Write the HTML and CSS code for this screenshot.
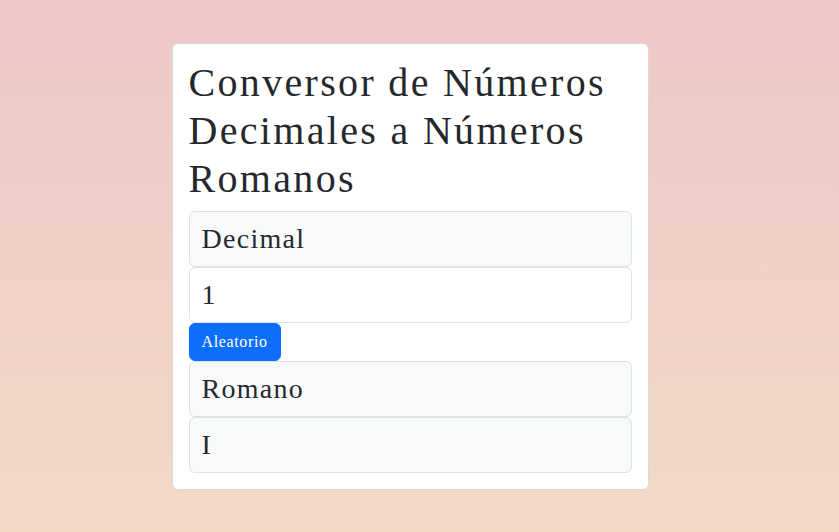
FILE: index.html
```html
<!DOCTYPE html>
<html lang="es">
<head>
<meta charset="utf-8">
<title>Conversor</title>
<link rel="stylesheet" href="styles.css">
</head>
<body>
<div class="page">
  <div class="card">
    <h1 class="title">Conversor de Números Decimales a Números Romanos</h1>
    <div class="box label">Decimal</div>
    <div class="box input">1</div>
    <div class="btn-row"><button class="btn">Aleatorio</button></div>
    <div class="box label">Romano</div>
    <div class="box label">I</div>
  </div>
</div>
</body>
</html>
```
FILE: styles.css
```css
html, body {
  margin: 0;
  height: 100%;
}
body {
  background: linear-gradient(180deg, #eec8c8 0%, #f2d9c6 100%);
  font-family: "Liberation Serif", "Times New Roman", serif;
  color: #212529;
  letter-spacing: 0.05em;
}
.page {
  display: flex;
  justify-content: center;
  padding: 43px 19px 0 0;
}
.card {
  width: 477px;
  box-sizing: border-box;
  background: #fff;
  border: 1px solid #d9d9d9;
  border-radius: 6px;
  padding: 15px 16px 16px;
}
.title {
  margin: 0 0 8px;
  font-size: 40px;
  font-weight: 400;
  line-height: 48px;
  letter-spacing: 0.058em;
  color: #25292d;
}
.box {
  border: 1px solid #dee2e6;
  border-radius: 6px;
  padding: 6px 12px;
  font-size: 28px;
  line-height: 42px;
  height: 56px;
  box-sizing: border-box;
  letter-spacing: 0.046em;
  color: #25292d;
}
.label {
  background: #f8f9fa;
}
.input {
  background: #fff;
}
.btn-row {
  display: flex;
}
.btn {
  font-family: "Liberation Serif", "Times New Roman", serif;
  font-size: 16px;
  line-height: 24px;
  letter-spacing: 0.04em;
  padding: 6px 12px;
  background: #0d6efd;
  color: #fff;
  border: 1px solid #0d6efd;
  border-radius: 6px;
  height: 38px;
}
```
